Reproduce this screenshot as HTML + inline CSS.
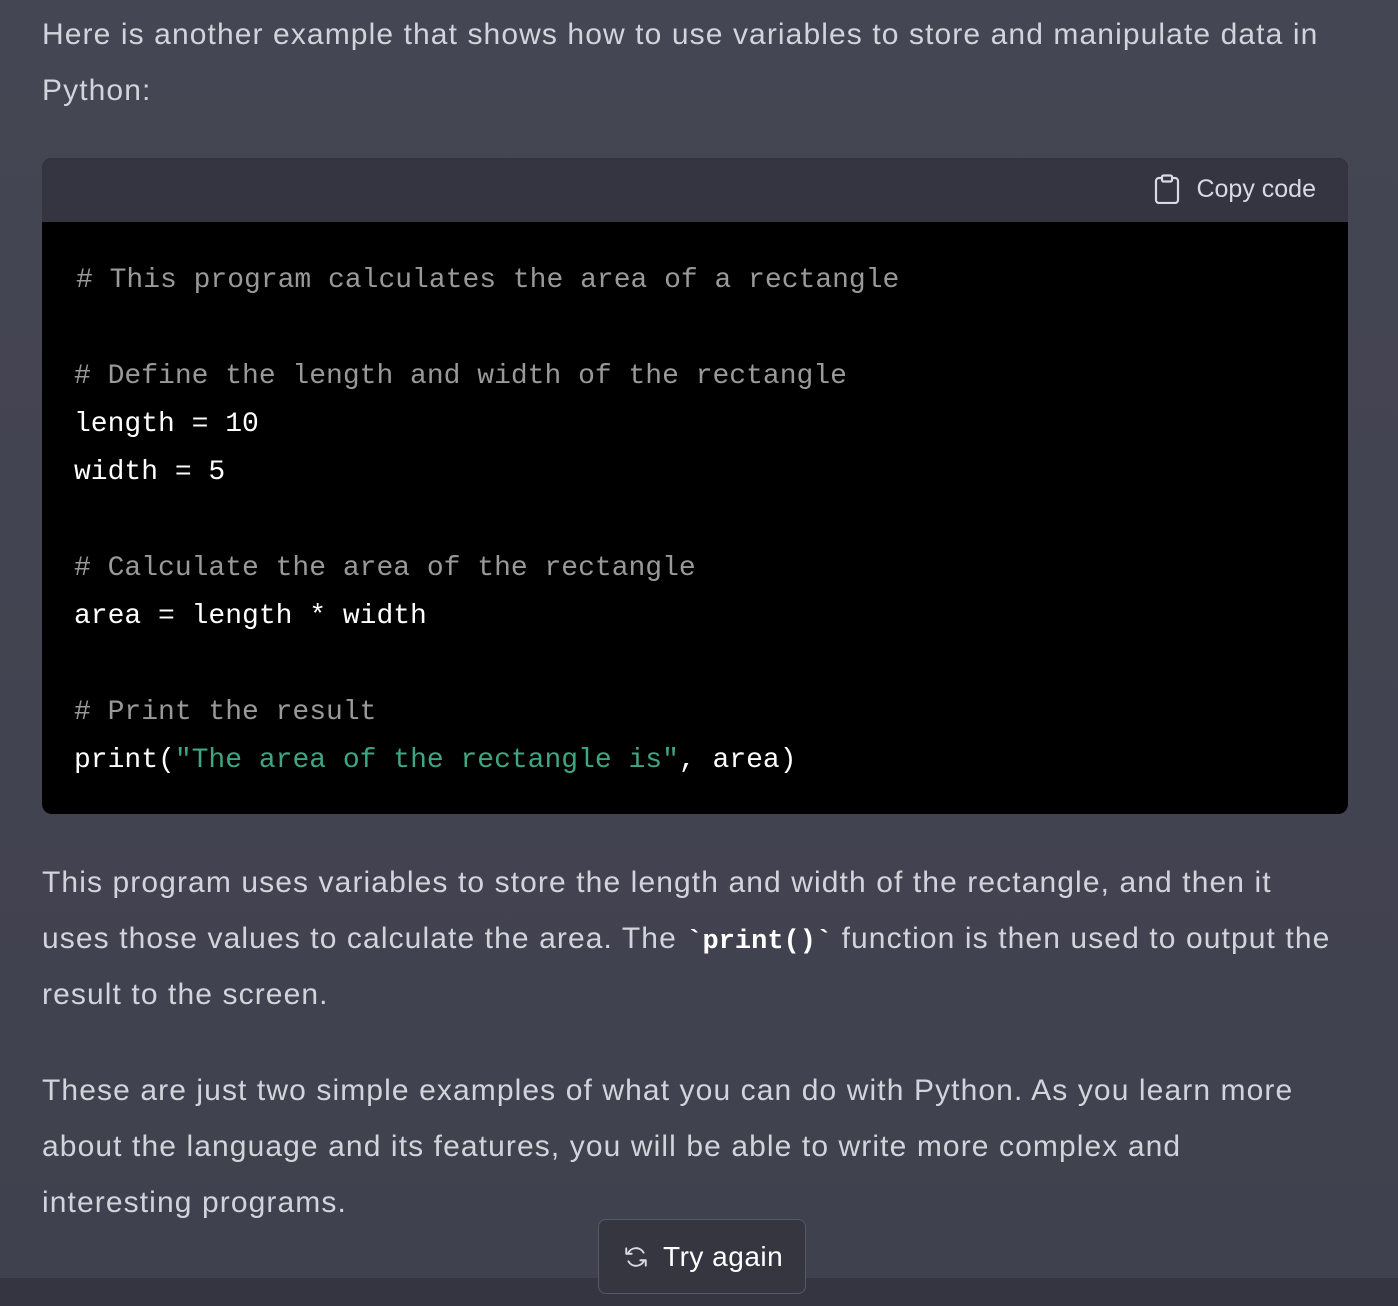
<!DOCTYPE html>
<html><head><meta charset="utf-8"><style>
*{margin:0;padding:0;box-sizing:border-box}
body{width:1398px;height:1306px;overflow:hidden;background:linear-gradient(#454653,#40414e 1278px,#343541 1278px);font-family:"Liberation Sans",sans-serif;color:#d1d5db;position:relative}
.t{position:absolute;left:42px;font-size:30px;letter-spacing:1.1px;white-space:nowrap;line-height:56px}
.code{position:absolute;left:42px;top:158px;width:1306px;height:656px;background:#000;border-radius:10px;overflow:hidden}
.hdr{height:64px;background:#343541;position:relative}
.copy{position:absolute;right:32px;top:16px;font-size:25px;color:#d9d9e3;display:flex;align-items:center;gap:16px}
.c{position:absolute;left:32px;font-family:"Liberation Mono",monospace;font-size:28px;line-height:48px;white-space:pre;color:#fff}
.cm{color:#999}.s{color:#3fa582}
.ic{font-family:"Liberation Mono",monospace;font-weight:bold;color:#fff;font-size:27px;letter-spacing:0}
.btn{position:absolute;left:598px;top:1219px;width:208px;height:75px;background:#353640;border:1.5px solid #565869;border-radius:8px;color:#fff;font-size:28px;letter-spacing:0.5px;display:flex;align-items:center;padding-left:24px;gap:14px}
</style></head><body>
<div class="t" style="top:7px">Here is another example that shows how to use variables to store and manipulate data in</div>
<div class="t" style="top:63px">Python:</div>
<div class="code">
<div class="hdr"><div class="copy"><svg width="26" height="30" viewBox="0 0 26 30" fill="none" stroke="#d9d9e3" stroke-width="2.2" stroke-linejoin="round"><rect x="2" y="4" width="22" height="25" rx="3"/><rect x="8" y="1.5" width="10" height="6" rx="1.5" fill="#343541"/></svg>Copy code</div></div>
<div class="c cm" style="top:99px;left:34px"># This program calculates the area of a rectangle</div>
<div class="c cm" style="top:195px"># Define the length and width of the rectangle</div>
<div class="c" style="top:243px">length = 10</div>
<div class="c" style="top:291px">width = 5</div>
<div class="c cm" style="top:387px"># Calculate the area of the rectangle</div>
<div class="c" style="top:435px">area = length * width</div>
<div class="c cm" style="top:531px"># Print the result</div>
<div class="c" style="top:579px">print(<span class="s">"The area of the rectangle is"</span>, area)</div>
</div>
<div class="t" style="top:855px">This program uses variables to store the length and width of the rectangle, and then it</div>
<div class="t" style="top:911px">uses those values to calculate the area. The <span class="ic">`print()`</span> function is then used to output the</div>
<div class="t" style="top:967px">result to the screen.</div>
<div class="t" style="top:1063px">These are just two simple examples of what you can do with Python. As you learn more</div>
<div class="t" style="top:1119px">about the language and its features, you will be able to write more complex and</div>
<div class="t" style="top:1175px">interesting programs.</div>
<div class="btn"><svg width="26" height="26" viewBox="0 0 24 24" fill="none" stroke="#d9d9e3" stroke-width="1.8" stroke-linecap="round" stroke-linejoin="round"><path d="M3 4v5h5"/><path d="M21 20v-5h-5"/><path d="M4.5 9A8 8 0 0 1 19 8"/><path d="M19.5 15A8 8 0 0 1 5 16"/></svg>Try again</div>
</body></html>
